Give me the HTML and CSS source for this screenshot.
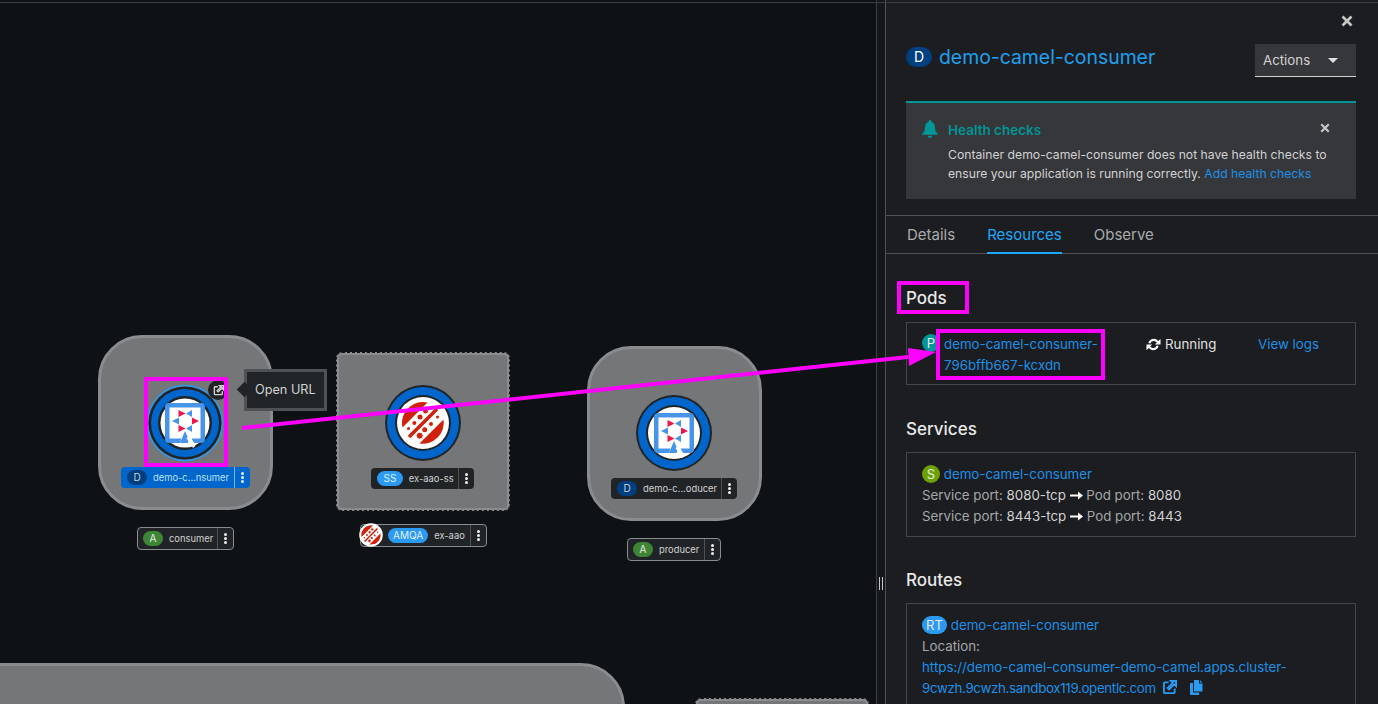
FILE: index.html
```html
<!DOCTYPE html>
<html lang="en">
<head>
  <meta charset="UTF-8">
  <title>Topology - demo-camel-consumer</title>
  <link rel="stylesheet" href="styles.css">
</head>
<body>
  <svg class="defs" width="0" height="0">
    <symbol id="quarkus" viewBox="-26 -26 52 52">
      <path d="M-5 20H-16Q-20 20 -20 16V-16Q-20 -20 -16 -20H16Q20 -20 20 -16V16Q20 20 16 20H9L6.500 15.500H15.500V-15.500H-15.500V15.500H-3.500Z" fill="#4695eb"/>
      <path d="M-6.500 -13L.5 -9.500L-6.500 -6ZM-6.500 2L.5 5.500L-6.500 9ZM7 -5.500L14 -2L7 1.500Z" fill="#f0164c"/>
      <path d="M7 -13V-6L1 -9.500ZM7 2V9L1 5.500ZM-6 -5.500V1.500L-13 -2Z" fill="#4695eb"/>
      <path d="M-5 20L0 8L4 17L2.500 20Z" fill="#4695eb"/>
      <path d="M1.500 15L3.500 13.500L10.500 23L8 25Z" fill="#fff"/>
    </symbol>
    <symbol id="amq" viewBox="-26 -26 52 52">
      <path d="M-20.500 4.500A21 21 0 0 1 4.500 -20.500Z" fill="#d0210c"/>
      <path d="M20.500 -3.500A21 21 0 0 1 -3.500 20.500Z" fill="#d0210c"/>
      <path d="M-14 14L14 -14" stroke="#d0210c" stroke-width="3.500"/>
      <circle cx="-3.300" cy="12.700" r="3.500" fill="#d0210c" stroke="#fff"/>
      <circle cx="1.700" cy="6.700" r="2.500" fill="#d0210c"/>
      <circle cx="8" cy="1" r="2" fill="#d0210c"/>
      <circle cx="14.500" cy="-6" r="1.500" fill="#d0210c"/>
      <circle cx="-14.500" cy="5.500" r="1.500" fill="#d0210c"/>
      <circle cx="-8.700" cy="0" r="2" fill="#d0210c"/>
      <circle cx="-3" cy="-6" r="2.500" fill="#d0210c"/>
      <circle cx="2.500" cy="-12" r="3" fill="#d0210c" stroke="#fff"/>
    </symbol>
    <symbol id="ext" viewBox="0 0 16 16">
      <path d="M7 2.500H3Q2 2.500 2 3.500V13Q2 14 3 14H12.500Q13.500 14 13.500 13V9M9.500 1H15V6.500L13 4.500L7.500 10L6 8.500L11.500 3Z" fill="none" stroke="currentColor" stroke-width="2"/>
    </symbol>
    <symbol id="x" viewBox="0 0 12 12">
      <path d="M1.500 1.500L10.500 10.500M10.500 1.500L1.500 10.500" stroke="currentColor" stroke-width="2.600" fill="none"/>
    </symbol>
    <symbol id="long-arrow" viewBox="0 0 13 9">
      <path d="M0 3.500H8V0.500L13 4.500L8 8.500V5.500H0Z" fill="#fff"/>
    </symbol>
  </svg>

  <div class="app">
    <main class="canvas">
      <div class="group" id="g-consumer"></div>
      <div class="group group-dashed" id="g-aao"></div>
      <div class="group" id="g-producer"></div>
      <div class="group group-big"></div>
      <div class="group group-dashed group-low"></div>

      <svg class="ring" id="r-consumer" viewBox="-40 -40 80 80">
        <circle r="37.500" fill="none" stroke="#2b9af3" stroke-width="1.500"/>
        <circle r="36.500" fill="#212427"/>
        <circle r="34" fill="#0066cc"/>
        <circle r="27" fill="#212427"/>
        <circle r="24.500" fill="#fff"/>
        <use href="#quarkus" x="-26" y="-26" width="52" height="52"/>
      </svg>
      <svg class="ring" id="r-aao" viewBox="-40 -40 80 80">
        <circle r="38" fill="#212427"/>
        <circle r="36" fill="#0066cc"/>
        <circle r="28" fill="#212427"/>
        <circle r="26" fill="#fff"/>
        <use href="#amq" x="-26" y="-26" width="52" height="52"/>
      </svg>
      <svg class="ring" id="r-producer" viewBox="-40 -40 80 80">
        <circle r="38" fill="#212427"/>
        <circle r="36" fill="#0066cc"/>
        <circle r="28" fill="#212427"/>
        <circle r="26" fill="#fff"/>
        <use href="#quarkus" x="-26" y="-26" width="52" height="52"/>
      </svg>

      <div class="open-btn">
        <svg width="11" height="11"><use href="#ext"/></svg>
      </div>
      <div class="tip">Open URL</div>

      <div class="chip chip-selected" id="c-consumer">
        <span class="badge badge-d">D</span><span class="chip-name">demo-c...nsumer</span><span class="kebab"><i></i><i></i><i></i></span>
      </div>
      <div class="chip chip-app" id="c-app-consumer">
        <span class="badge badge-a">A</span><span class="chip-name">consumer</span><span class="kebab"><i></i><i></i><i></i></span>
      </div>
      <div class="chip" id="c-ss">
        <span class="badge badge-blue badge-ss">SS</span><span class="chip-name">ex-aao-ss</span><span class="kebab"><i></i><i></i><i></i></span>
      </div>
      <div class="chip chip-app" id="c-amqa">
        <span class="badge badge-blue">AMQA</span><span class="chip-name">ex-aao</span><span class="kebab"><i></i><i></i><i></i></span>
      </div>
      <svg class="amq-mini" viewBox="-26 -26 52 52">
        <circle r="25.500" fill="#fff"/>
        <use href="#amq" x="-26" y="-26" width="52" height="52"/>
      </svg>
      <div class="chip" id="c-producer">
        <span class="badge badge-d">D</span><span class="chip-name">demo-c...oducer</span><span class="kebab"><i></i><i></i><i></i></span>
      </div>
      <div class="chip chip-app" id="c-app-producer">
        <span class="badge badge-a">A</span><span class="chip-name">producer</span><span class="kebab"><i></i><i></i><i></i></span>
      </div>
    </main>

    <div class="splitter"><span></span><span></span></div>

    <aside class="panel">
      <div class="close-row"><svg class="close" width="12" height="12"><use href="#x"/></svg></div>
      <header class="title-row">
        <span class="title-badge">D</span>
        <a class="title-link">demo-camel-consumer</a>
        <div class="actions">Actions <span class="caret"></span></div>
      </header>

      <section class="alert">
        <svg class="bell" width="16" height="18" viewBox="0 0 16 18">
          <path d="M8 0a1.500 1.500 0 0 1 1.500 1.500V2C12 2.700 13 5 13 7.500c0 3.500 1 4.500 3 6.500v.8H0V14c2-2 3-3 3-6.500C3 5 4 2.700 6.500 2v-.5A1.500 1.500 0 0 1 8 0zM5.800 15.800h4.400a2.200 2.200 0 0 1-4.400 0z" fill="#009596"/>
        </svg>
        <div class="alert-body">
          <h4 class="alert-title">Health checks</h4>
          <p>Container demo-camel-consumer does not have health checks to ensure your application is running correctly. <a>Add health checks</a></p>
        </div>
        <svg class="alert-close" width="10" height="10"><use href="#x"/></svg>
      </section>

      <nav class="tabs">
        <a class="tab">Details</a>
        <a class="tab tab-active">Resources</a>
        <a class="tab">Observe</a>
      </nav>

      <div class="content">
        <h3 class="section-title section-pods">Pods</h3>
        <div class="box box-pods">
          <div class="pod-name">
            <span class="res-badge res-p">P</span>
            <a>demo-camel-consumer-<br>796bffb667-kcxdn</a>
          </div>
          <div class="pod-status">
            <svg width="15" height="15" viewBox="0 0 16 16"><path d="M2.500 6.500A6 6 0 0 1 13 4.200L15.500 2V8H9.500L11.600 5.800A4 4 0 0 0 4.600 7ZM13.500 9.500A6 6 0 0 1 3 11.800L.5 14V8H6.500L4.400 10.200A4 4 0 0 0 11.400 9Z" fill="#fff"/></svg>
            Running
          </div>
          <a class="pod-logs">View logs</a>
        </div>

        <h3 class="section-title">Services</h3>
        <div class="box">
          <div><span class="res-badge res-s">S</span> <a>demo-camel-consumer</a></div>
          <div><span class="muted">Service port:</span> 8080-tcp <svg class="port-arrow" width="13" height="9"><use href="#long-arrow"/></svg> <span class="muted">Pod port:</span> 8080</div>
          <div><span class="muted">Service port:</span> 8443-tcp <svg class="port-arrow" width="13" height="9"><use href="#long-arrow"/></svg> <span class="muted">Pod port:</span> 8443</div>
        </div>

        <h3 class="section-title section-routes">Routes</h3>
        <div class="box box-open">
          <div><span class="res-badge res-rt">RT</span> <a>demo-camel-consumer</a></div>
          <div class="muted">Location:</div>
          <a class="route-url">https://demo-camel-consumer-demo-camel.apps.cluster-<br><span class="route-host">9cwzh.9cwzh.sandbox119.opentlc.com</span>
            <svg class="route-ext" width="15" height="15"><use href="#ext"/></svg>
            <svg class="route-copy" width="13" height="15" viewBox="0 0 13 15"><path d="M4 0H9V3.500H12.500V11.500H4ZM10 .3L12.300 2.500H10ZM0 3H3V12.500H9V15H1Q0 15 0 14Z" fill="#2b9af3"/></svg>
          </a>
        </div>
      </div>
    </aside>
  </div>

  <!-- annotations drawn over the screenshot -->
  <div class="mark mark-pods"></div>
  <div class="mark mark-pod"></div>
  <div class="mark mark-node"></div>
  <svg class="mark-arrow" width="1378" height="704">
    <path d="M242 428L908 357" stroke="#ff00ff" stroke-width="4" fill="none"/>
    <path d="M908 348L936 352L909 366Z" fill="#ff00ff"/>
  </svg>
</body>
</html>
```
FILE: styles.css
```css
* {
  box-sizing: border-box;
}

html, body {
  margin: 0;
  height: 704px;
  overflow: hidden;
}

body {
  font-family: Inter, "Noto Sans", sans-serif;
  font-size: 13.300px;
  line-height: 21px;
  color: #d2d2d2;
  background: #0f1214;
  position: relative;
}

/* thin line along the top of the view */
body::before {
  content: "";
  position: absolute;
  left: 0;
  top: 2px;
  width: 100%;
  height: 1px;
  background: #3c3f42;
  z-index: 1;
}

a {
  color: #1e90e6;
}

.defs {
  position: absolute;
}

.app {
  display: flex;
  height: 704px;
}

/* topology canvas */

.canvas {
  position: relative;
  width: 876px;
  height: 704px;
  background: #0f1214;
  overflow: hidden;
}

.group {
  position: absolute;
  width: 175px;
  height: 175px;
  background: #757678;
  border: 3px solid #8a8d90;
  border-radius: 44px;
}

#g-consumer { left: 98px; top: 335px; }
#g-aao { left: 336px; top: 352px; width: 174px; height: 159px; }
#g-producer { left: 587px; top: 346px; }

.group-dashed {
  border-radius: 6px;
  outline: 1.500px dashed #0f1214;
  outline-offset: -1.500px;
}

.group-big {
  left: -60px;
  top: 663px;
  width: 685px;
  height: 300px;
}

.group-low {
  left: 695px;
  top: 698px;
  width: 174px;
  height: 100px;
}

.ring {
  position: absolute;
  width: 80px;
  height: 80px;
}

#r-consumer { left: 145px; top: 383px; }
#r-aao { left: 383px; top: 383px; }
#r-producer { left: 634px; top: 393px; }

.open-btn {
  position: absolute;
  left: 208px;
  top: 380px;
  width: 20px;
  height: 20px;
  border-radius: 50%;
  background: #212427;
  color: #d2d2d2;
  display: flex;
  align-items: center;
  justify-content: center;
}

.tip {
  position: absolute;
  left: 244px;
  top: 369px;
  width: 83px;
  height: 42px;
  padding-left: 8px;
  background: #212427;
  border: 3px solid #4f5255;
  color: #d2d2d2;
  font-size: 12.700px;
  line-height: 36px;
  white-space: nowrap;
}

.tip::before {
  content: "";
  position: absolute;
  left: -8px;
  top: 12px;
  width: 11px;
  height: 11px;
  background: #212427;
  transform: rotate(45deg);
}

.chip {
  position: absolute;
  display: flex;
  align-items: center;
  height: 21px;
  padding-left: 6px;
  background: #212427;
  border-radius: 4px;
  font-size: 9.400px;
  line-height: 14px;
  color: #d2d2d2;
}

.chip-selected {
  background: #0066cc;
  color: #bee1f4;
}

.chip-app {
  height: 23px;
  border: 1.500px solid #8a8d90;
  padding-left: 5px;
}

.chip-name {
  flex: 1;
  padding-left: 6px;
  white-space: nowrap;
}

#c-consumer { left: 121px; top: 467px; width: 129px; }
#c-app-consumer { left: 137px; top: 527px; width: 97px; }
#c-ss { left: 371px; top: 468px; width: 103px; }
#c-amqa { left: 360px; top: 524px; width: 127px; padding-left: 27px; }
#c-producer { left: 611px; top: 478px; width: 126px; }
#c-app-producer { left: 627px; top: 538px; width: 94px; }

.amq-mini {
  position: absolute;
  left: 359px;
  top: 523px;
  width: 24px;
  height: 24px;
}

.badge {
  height: 15px;
  min-width: 20px;
  padding: 0 5px;
  border-radius: 8px;
  font-size: 10px;
  line-height: 15px;
  text-align: center;
  color: #fff;
}

.badge-d { background: #004080; color: #d2d2d2; }
.badge-a { background: #3e8635; color: #e8e8e8; }
.badge-blue { background: #2b9af3; color: #e0f0ff; }
.badge-ss { padding: 0 6.500px; }

.kebab {
  width: 16px;
  height: 100%;
  border-left: 1px solid #4f5255;
  display: flex;
  flex-direction: column;
  align-items: center;
  justify-content: center;
  gap: 1px;
}

.chip-selected .kebab {
  border-left-color: #73bcf7;
}

.kebab i {
  width: 3px;
  height: 3px;
  border-radius: 50%;
  background: #f0f0f0;
}

/* splitter */

.splitter {
  width: 9px;
  height: 704px;
  background: #15171a;
  border-left: 1px solid #3c3f42;
  display: flex;
  align-items: flex-start;
  justify-content: center;
  gap: 2px;
  padding-top: 577px;
}

.splitter span {
  width: 1px;
  height: 13px;
  background: #c7c7c7;
}

/* side panel */

.panel {
  width: 493px;
  height: 704px;
  background: #1b1d21;
  border-left: 1px solid #4f5255;
  padding-top: 2px;
  overflow: hidden;
}

.close-row {
  display: flex;
  justify-content: flex-end;
  height: 42px;
  padding: 13px 25px 0 0;
}

.close {
  color: #c7c7c7;
}

.title-row {
  display: flex;
  align-items: center;
  margin: 0 22px 0 20px;
  height: 33px;
}

.title-badge {
  width: 26px;
  height: 20px;
  border-radius: 10px;
  background: #004080;
  color: #fff;
  font-size: 14px;
  line-height: 20px;
  text-align: center;
  margin-right: 7px;
  margin-top: -7px;
}

.title-link {
  flex: 1;
  font-size: 19.400px;
  margin-top: -7px;
  color: #1fa0f0;
}

.actions {
  width: 101px;
  height: 33px;
  padding: 1px 18px 0 8px;
  background: #36373b;
  border-bottom: 1px solid #d2d2d2;
  color: #d2d2d2;
  display: flex;
  align-items: center;
  justify-content: space-between;
}

.caret {
  width: 0;
  height: 0;
  border-left: 5px solid transparent;
  border-right: 5px solid transparent;
  border-top: 5px solid #e0e0e0;
}

.alert {
  position: relative;
  display: flex;
  margin: 24px 22px 16px 20px;
  height: 98px;
  padding: 17px 16px 0 16px;
  background: #36373b;
  border-top: 2px solid #009596;
  gap: 10px;
}

.bell {
  flex: none;
}

.alert-title {
  margin: 0 0 4px;
  font-size: 13.500px;
  font-weight: 600;
  color: #009596;
  line-height: 21px;
}

.alert-body p {
  margin: 0;
  font-size: 12.200px;
  line-height: 19px;
  color: #d2d2d2;
}

.alert-close {
  position: absolute;
  right: 26px;
  top: 20px;
  color: #c7c7c7;
}

.tabs {
  display: flex;
  gap: 32px;
  height: 39px;
  padding-left: 21px;
  border-top: 1px solid #4f5255;
  border-bottom: 1px solid #4f5255;
  line-height: 37px;
  font-size: 15px;
  color: #aaabac;
}

.tab {
  color: #aaabac;
  height: 38px;
}

.tab-active {
  color: #1fa7f8;
  border-bottom: 2px solid #1fa7f8;
}

.content {
  padding: 0 22px 0 20px;
}

.section-title {
  margin: 32px 0 11px;
  font-size: 17px;
  font-weight: 500;
  line-height: 24px;
  color: #e8e8e8;
}

.section-pods {
  margin: 32px 0 12px;
}

.section-routes {
  margin-top: 31px;
}

.box {
  border: 1px solid #444548;
  padding: 11px 15px 9px;
}

.box-pods {
  display: flex;
  height: 63px;
}

.box-open {
  height: 140px;
}

.pod-name {
  width: 224px;
  position: relative;
  padding-left: 22px;
}

.pod-name .res-badge {
  position: absolute;
  left: 0;
  top: 0;
}

.pod-status {
  width: 112px;
  display: flex;
  align-items: flex-start;
  gap: 4px;
  color: #e0e0e0;
}

.pod-status svg {
  margin-top: 3px;
}

.res-badge {
  display: inline-block;
  min-width: 18px;
  height: 18px;
  border-radius: 9px;
  font-size: 13px;
  line-height: 18px;
  text-align: center;
  color: #e8e8e8;
}

.res-p { background: #009596; }
.res-s { background: #6ca100; }
.res-rt { background: #2b9af3; min-width: 25px; }

.muted {
  color: #a6a7a9;
}

.port-arrow {
  vertical-align: 0;
}

.route-url {
  display: block;
}

.route-host {
  letter-spacing: -0.330px;
}

.route-ext {
  color: #2b9af3;
  vertical-align: -2px;
  margin-left: 2px;
}

.route-copy {
  vertical-align: -2px;
  margin-left: 10px;
}

/* magenta annotations */

.mark {
  position: absolute;
  border: 4px solid #ff00ff;
}

.mark-pods { left: 897px; top: 281px; width: 72px; height: 33px; }
.mark-pod { left: 936px; top: 329px; width: 169px; height: 51px; }
.mark-node { left: 144px; top: 377px; width: 84px; height: 90px; }

.mark-arrow {
  position: absolute;
  left: 0;
  top: 0;
}
```
